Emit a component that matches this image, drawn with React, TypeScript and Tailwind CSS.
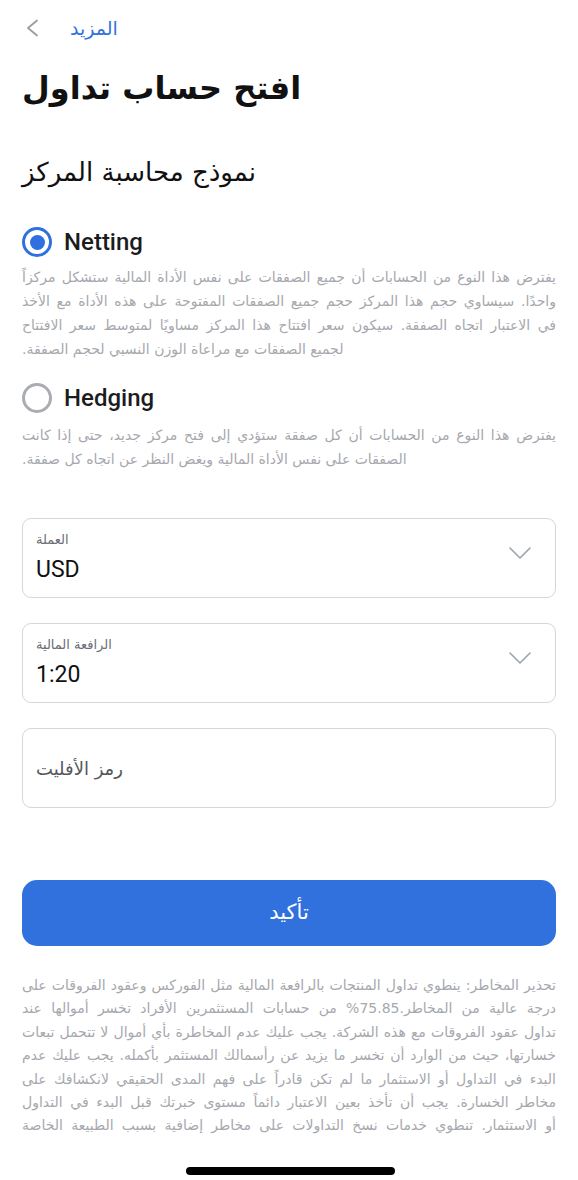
import { useState } from 'react';

type Mode = 'netting' | 'hedging';

const ar = "font-['DejaVu_Sans','Noto_Sans',sans-serif]";
const latin = "font-['Roboto','Liberation_Sans',sans-serif]";

// строки текста как в макете
const nettingLines = [
  'يفترض هذا النوع من الحسابات أن جميع الصفقات على نفس الأداة المالية ستشكل مركزاً',
  'واحدًا. سيساوي حجم هذا المركز حجم جميع الصفقات المفتوحة على هذه الأداة مع الأخذ',
  'في الاعتبار اتجاه الصفقة. سيكون سعر افتتاح هذا المركز مساويًا لمتوسط سعر الافتتاح',
];
const nettingLast = 'لجميع الصفقات مع مراعاة الوزن النسبي لحجم الصفقة.';

const hedgingLines = ['يفترض هذا النوع من الحسابات أن كل صفقة ستؤدي إلى فتح مركز جديد، حتى إذا كانت'];
const hedgingLast = 'الصفقات على نفس الأداة المالية ويغض النظر عن اتجاه كل صفقة.';

const warningLines = [
  'تحذير المخاطر: ينطوي تداول المنتجات بالرافعة المالية مثل الفوركس وعقود الفروقات على',
  'درجة عالية من المخاطر.75.85% من حسابات المستثمرين الأفراد تخسر أموالها عند',
  'تداول عقود الفروقات مع هذه الشركة. يجب عليك عدم المخاطرة بأي أموال لا تتحمل تبعات',
  'خسارتها، حيث من الوارد أن تخسر ما يزيد عن رأسمالك المستثمر بأكمله. يجب عليك عدم',
  'البدء في التداول أو الاستثمار ما لم تكن قادراً على فهم المدى الحقيقي لانكشافك على',
  'مخاطر الخسارة. يجب أن تأخذ بعين الاعتبار دائماً مستوى خبرتك قبل البدء في التداول',
  'أو الاستثمار. تنطوي خدمات نسخ التداولات على مخاطر إضافية بسبب الطبيعة الخاصة',
];

const Chevron = () => (
  <svg width="22" height="12" viewBox="0 0 22 12" fill="none">
    <path d="M1 1l10 10L21 1" stroke="#9ca3af" strokeWidth="1.6" strokeLinecap="round" strokeLinejoin="round" />
  </svg>
);

const Radio = ({ on }: { on: boolean }) => (
  <span
    className={`flex h-[30px] w-[30px] items-center justify-center rounded-full border-[3px] ${
      on ? 'border-[#2f6fde]' : 'border-[#a9acb3]'
    }`}
  >
    {on && <span className="h-[15px] w-[15px] rounded-full bg-[#2f6fde]" />}
  </span>
);

const Desc = ({ lines, last }: { lines: string[]; last: string }) => (
  <div dir="rtl" className={`${ar} text-[14px] leading-[24px] text-[#a6a8ae]`}>
    {lines.map((l) => (
      <div key={l} className="whitespace-nowrap text-justify [text-align-last:justify]">
        {l}
      </div>
    ))}
    <div className="whitespace-nowrap text-left">{last}</div>
  </div>
);

const SelectField = ({ label, value }: { label: string; value: string }) => (
  <div className="flex h-[80px] items-center justify-between rounded-[9px] border border-[#d6d7db] pl-[13px] pr-[24px]">
    <div className="flex flex-col">
      <span dir="rtl" className={`${ar} text-left text-[13px] leading-[18px] text-[#6b6e75]`}>{label}</span>
      <span className={`${latin} mt-[6px] text-[23px] leading-[30px] text-[#111]`}>{value}</span>
    </div>
    <div className="-mt-[10px]">
      <Chevron />
    </div>
  </div>
);

export default function App() {
  const [mode, setMode] = useState<Mode>('netting');

  return (
    <div className="relative h-[1180px] w-[578px] overflow-hidden bg-white">
      <div className="px-[22px]">
        {/* шапка */}
        <div className="flex h-[56px] items-center">
          <svg width="14" height="18" viewBox="0 0 14 18" fill="none" className="ml-[3px]">
            <path d="M12 1.5L3 9l9 7.5" stroke="#9a9ca2" strokeWidth="1.8" strokeLinecap="round" strokeLinejoin="round" />
          </svg>
          <span dir="rtl" className={`${ar} ml-[31px] text-[19px] leading-[24px] text-[#3173dc]`}>المزيد</span>
        </div>

        <h1 dir="rtl" className={`${ar} mt-[10px] text-left text-[32px] font-bold leading-[44px] text-[#111]`}>
          افتح حساب تداول
        </h1>
        <h2 dir="rtl" className={`${ar} mt-[44px] text-left text-[26px] leading-[36px] text-[#111]`}>
          نموذج محاسبة المركز
        </h2>

        <button onClick={() => setMode('netting')} className="mt-[37px] flex h-[30px] items-center gap-[12px]">
          <Radio on={mode === 'netting'} />
          <span className={`${latin} text-[24px] font-medium text-[#1b1c20]`}>Netting</span>
        </button>
        <div className="mt-[8px]">
          <Desc lines={nettingLines} last={nettingLast} />
        </div>

        <button onClick={() => setMode('hedging')} className="mt-[22px] flex h-[30px] items-center gap-[12px]">
          <Radio on={mode === 'hedging'} />
          <span className={`${latin} text-[24px] font-medium text-[#1b1c20]`}>Hedging</span>
        </button>
        <div className="mt-[10px]">
          <Desc lines={hedgingLines} last={hedgingLast} />
        </div>

        <div className="mt-[47px] flex flex-col gap-[25px]">
          <SelectField label="العملة" value="USD" />
          <SelectField label="الرافعة المالية" value="1:20" />
          <div className="flex h-[80px] items-center rounded-[9px] border border-[#d6d7db] pl-[13px]">
            <span dir="rtl" className={`${ar} text-[18px] text-[#55575c]`}>رمز الأفليت</span>
          </div>
        </div>

        <button className="mt-[72px] flex h-[66px] w-full items-center justify-center rounded-[15px] bg-[#3071de]">
          <span className={`${ar} text-[21px] text-white`}>تأكيد</span>
        </button>

        <div dir="rtl" className={`${ar} mt-[28px] text-[14px] leading-[23.4px] text-[#a6a8ae]`}>
          {warningLines.map((l) => (
            <div key={l} className="whitespace-nowrap text-justify [text-align-last:justify]">
              {l}
            </div>
          ))}
        </div>
      </div>

      <div className="absolute bottom-[5px] left-[186px] h-[8px] w-[209px] rounded-full bg-black" />
    </div>
  );
}
